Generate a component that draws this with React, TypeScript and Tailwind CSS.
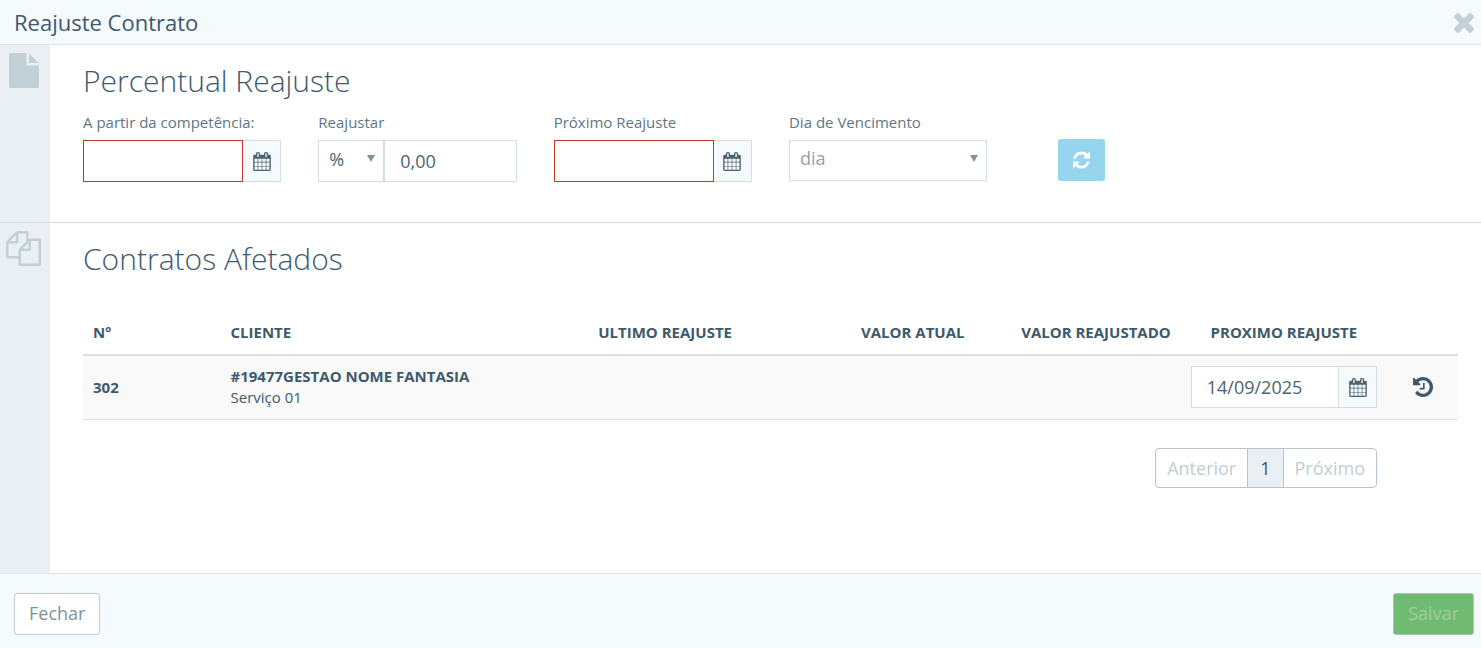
import { useState, type ReactNode } from "react";
import clsx from "clsx";

type IconProps = {
    viewBox: string;
    d: string;
    className?: string;
};

const Icon = ({ viewBox, d, className }: IconProps) => (
    <svg viewBox={viewBox} fill="currentColor" aria-hidden="true" className={className}>
        <path d={d} />
    </svg>
);

const CalendarIcon = () => (
    <Icon
        viewBox="0 0 1664 1792"
        className="h-[19px] w-[18px]"
        d="M128 1664h288v-288h-288v288zm352 0h320v-288h-320v288zm-352-352h288v-320h-288v320zm352 0h320v-320h-320v320zm-352-384h288v-288h-288v288zm736 736h320v-288h-320v288zm-384-736h320v-288h-320v288zm768 736h288v-288h-288v288zm-384-352h320v-320h-320v320zm-352-864v-288q0-13-9.5-22.5t-22.5-9.5h-64q-13 0-22.5 9.5t-9.5 22.5v288q0 13 9.5 22.5t22.5 9.5h64q13 0 22.5-9.5t9.5-22.5zm736 864h288v-320h-288v320zm-384-384h320v-288h-320v288zm384 0h288v-288h-288v288zm32-480v-288q0-13-9.5-22.5t-22.5-9.5h-64q-13 0-22.5 9.5t-9.5 22.5v288q0 13 9.5 22.5t22.5 9.5h64q13 0 22.5-9.5t9.5-22.5zm384-64v1280q0 52-38 90t-90 38h-1408q-52 0-90-38t-38-90v-1280q0-52 38-90t90-38h128v-96q0-66 47-113t113-47h64q66 0 113 47t47 113v96h384v-96q0-66 47-113t113-47h64q66 0 113 47t47 113v96h128q52 0 90 38t38 90z"
    />
);

const RefreshIcon = () => (
    <Icon
        viewBox="0 0 1536 1792"
        className="h-5 w-[17px]"
        d="M1511 1056q0 5-1 7-64 268-268 434.5t-478 166.5q-146 0-282.5-55t-243.5-157l-129 129q-19 19-45 19t-45-19-19-45v-448q0-26 19-45t45-19h448q26 0 45 19t19 45-19 45l-137 137q71 66 161 102t187 36q134 0 250-65t186-179q11-17 53-117 8-23 30-23h192q13 0 22.5 9.5t9.5 22.5zm25-800v448q0 26-19 45t-45 19h-448q-26 0-45-19t-19-45 19-45l138-138q-148-137-349-137-134 0-250 65t-186 179q-11 17-53 117-8 23-30 23h-199q-13 0-22.5-9.5t-9.5-22.5v-7q65-268 270-434.5t480-166.5q146 0 284 55.5t245 156.5l130-129q19-19 45-19t45 19 19 45z"
    />
);

const HistoryIcon = () => (
    <Icon
        viewBox="0 0 1536 1792"
        className="h-6 w-5"
        d="M1536 896q0 156-61 298t-164 245-245 164-298 61q-172 0-327-72.5t-264-204.5q-7-10-6.5-22.5t8.5-20.5l137-138q10-9 25-9 16 2 23 12 73 95 179 147t225 52q104 0 198.5-40.5t163.5-109.5 109.5-163.5 40.5-198.5-40.5-198.5-109.5-163.5-163.5-109.5-198.5-40.5q-98 0-188 35.5t-160 101.5l137 138q31 30 14 69-17 40-59 40h-448q-26 0-45-19t-19-45v-448q0-42 40-59 39-17 69 14l130 129q107-101 244.5-156.5t284.5-55.5q156 0 298 61t245 164 164 245 61 298zm-640-288v448q0 14-9 23t-23 9h-320q-14 0-23-9t-9-23v-64q0-14 9-23t23-9h224v-352q0-14 9-23t23-9h64q14 0 23 9t9 23z"
    />
);

const FileIcon = () => (
    <Icon
        viewBox="128 0 1536 1792"
        className="h-[35px] w-[30px]"
        d="M1152 512v-472q22 14 36 28l408 408q14 14 28 36h-472zm-128 32q0 40 28 68t68 28h544v1056q0 40-28 68t-68 28h-1344q-40 0-68-28t-28-68v-1600q0-40 28-68t68-28h800v544z"
    />
);

const FilesIcon = () => (
    <Icon
        viewBox="0 0 1792 1792"
        className="h-[35px] w-[35px]"
        d="M1696 384q40 0 68 28t28 68v1216q0 40-28 68t-68 28h-960q-40 0-68-28t-28-68v-288h-544q-40 0-68-28t-28-68v-672q0-40 20-88t48-76l408-408q28-28 76-48t88-20h416q40 0 68 28t28 68v328q68-40 128-40h416zm-544 213l-299 299h299v-299zm-640-384l-299 299h299v-299zm196 647l316-316v-416h-384v416q0 40-28 68t-68 28h-416v640h512v-256q0-40 20-88t48-76zm956 804v-1152h-384v416q0 40-28 68t-68 28h-416v640h896z"
    />
);

const CloseIcon = () => (
    <Icon
        viewBox="302 366 1188 1188"
        className="h-5 w-5"
        d="M1490 1322q0 40-28 68l-136 136q-28 28-68 28t-68-28l-294-294-294 294q-28 28-68 28t-68-28l-136-136q-28-28-28-68t28-68l294-294-294-294q-28-28-28-68t28-68l136-136q28-28 68-28t68 28l294 294 294-294q28-28 68-28t68 28l136 136q28 28 28 68t-28 68l-294 294 294 294q28 28 28 68z"
    />
);

const Section = ({ icon, title, children }: { icon: ReactNode; title: string; children: ReactNode }) => (
    <>
        <div className="flex w-[50px] shrink-0 justify-center bg-[#e9eff3] pt-2 pr-[3px] text-[#c4d0d7]">{icon}</div>
        <div className="min-w-0 flex-1 pt-4 pr-[23px] pl-[33px]">
            <h2 className="text-[30px] leading-10 font-light text-[#3d596b]">{title}</h2>
            {children}
        </div>
    </>
);

const Field = ({ id, label, children }: { id: string; label: string; children: ReactNode }) => (
    <div>
        <label htmlFor={id} className="block pb-2 text-[15px] leading-5 text-[#5f7684]">
            {label}
        </label>
        {children}
    </div>
);

type DateInputProps = {
    id: string;
    invalid?: boolean;
    initial?: string;
    label?: string;
};

const DateInput = ({ id, invalid, initial = "", label }: DateInputProps) => {
    const [value, setValue] = useState(initial);

    return (
        <div className="flex h-[42px]">
            <input
                id={id}
                type="text"
                aria-label={label}
                aria-invalid={invalid}
                value={value}
                onChange={(e) => setValue(e.target.value)}
                className={clsx(
                    "w-full min-w-0 flex-1 border bg-white px-[15px] text-[18px] text-[#4d6370] outline-none",
                    invalid ? "border-[#c0392b]" : "border-[#d3dfe3]"
                )}
            />
            <button
                type="button"
                aria-label="Abrir calendário"
                className="flex w-[38px] shrink-0 items-center justify-center border border-l-0 border-[#d3dfe3] bg-[#f5fafd] text-[#4d6370]"
            >
                <CalendarIcon />
            </button>
        </div>
    );
};

const Arrow = () => (
    <svg viewBox="0 0 8 7" aria-hidden="true" className="pointer-events-none absolute top-[15px] right-[9px] h-[7px] w-2">
        <path d="M0 0h8L4 7z" fill="#80929d" />
    </svg>
);

// CLIENTE takes whatever the other columns leave
const headings = [
    { label: "Nº", className: "w-[10%] text-left" },
    { label: "CLIENTE", className: "text-left" },
    { label: "ULTIMO REAJUSTE", className: "w-[15%] text-center" },
    { label: "VALOR ATUAL", className: "w-[15%] text-right" },
    { label: "VALOR REAJUSTADO", className: "w-[15%] text-right" },
    { label: "PROXIMO REAJUSTE", className: "w-[15%] text-center" },
    { label: "", className: "w-[71px]" },
];

const App = () => {
    const [amount, setAmount] = useState("0,00");

    return (
        <div className="flex min-h-screen flex-col bg-white font-['Open_Sans',sans-serif] text-[#3d596b]">
            <header className="flex h-[45px] items-center justify-between border-b border-[#dde6ea] bg-[#f5fafd] pr-[7px] pl-[14px]">
                <h1 className="text-[22px] leading-8">Reajuste Contrato</h1>
                <button type="button" aria-label="Fechar janela" className="pt-px text-[#c4d0d7]">
                    <CloseIcon />
                </button>
            </header>

            <section className="flex border-b border-[#d3dfe3]">
                <Section icon={<FileIcon />} title="Percentual Reajuste">
                    <div className="grid grid-cols-6 gap-x-[37px] pt-[11px] pb-10">
                        <Field id="competencia" label="A partir da competência:">
                            <DateInput id="competencia" invalid />
                        </Field>
                        <Field id="valor" label="Reajustar">
                            <div className="flex h-[42px]">
                                <div className="relative w-[66px] shrink-0">
                                    <select
                                        aria-label="Tipo de reajuste"
                                        className="h-full w-full appearance-none border border-[#d3dfe3] bg-white pr-5 pb-1 pl-[10px] text-[18px] text-[#4d6370] outline-none"
                                    >
                                        <option>%</option>
                                        <option>R$</option>
                                    </select>
                                    <Arrow />
                                </div>
                                <input
                                    id="valor"
                                    type="text"
                                    value={amount}
                                    onChange={(e) => setAmount(e.target.value)}
                                    className="w-full min-w-0 flex-1 border border-[#d3dfe3] px-[15px] text-[18px] text-[#4d6370] outline-none"
                                />
                            </div>
                        </Field>
                        <Field id="proximo" label="Próximo Reajuste">
                            <DateInput id="proximo" invalid />
                        </Field>
                        <Field id="vencimento" label="Dia de Vencimento">
                            <div className="relative h-[41px]">
                                <select
                                    id="vencimento"
                                    className="h-full w-full appearance-none border border-[#d3dfe3] bg-white pr-5 pb-1 pl-[10px] text-[18px] text-[#93a2ab] outline-none"
                                >
                                    <option>dia</option>
                                </select>
                                <Arrow />
                            </div>
                        </Field>
                        <div className="flex items-end pb-px pl-[34px]">
                            <button
                                type="button"
                                aria-label="Atualizar"
                                className="flex h-[42px] w-[47px] items-center justify-center rounded-[3px] bg-[#95d6ee] text-white"
                            >
                                <RefreshIcon />
                            </button>
                        </div>
                    </div>
                </Section>
            </section>

            <section className="flex flex-1">
                <Section icon={<FilesIcon />} title="Contratos Afetados">
                    <table className="mt-[31px] w-full table-fixed border-collapse text-[15px] leading-[21px]">
                        <thead>
                            <tr className="h-[45px] border-b-2 border-[#dddddd]">
                                {headings.map(({ label, className }) => (
                                    <th key={label} className={clsx("px-[10px] font-bold whitespace-nowrap", className)}>
                                        {label}
                                    </th>
                                ))}
                            </tr>
                        </thead>
                        <tbody>
                            <tr className="h-16 border-b border-[#d9e0e2] bg-[#f9f9f9]">
                                <td className="px-[10px] font-bold">302</td>
                                <td className="px-[10px]">
                                    <div className="font-bold">#19477GESTAO NOME FANTASIA</div>
                                    <div>Serviço 01</div>
                                </td>
                                <td></td>
                                <td></td>
                                <td></td>
                                <td className="px-[10px]">
                                    <DateInput id="proximo-302" initial="14/09/2025" label="Próximo reajuste do contrato 302" />
                                </td>
                                <td className="text-center">
                                    <button type="button" aria-label="Histórico" className="align-middle">
                                        <HistoryIcon />
                                    </button>
                                </td>
                            </tr>
                        </tbody>
                    </table>

                    <nav aria-label="Paginação" className="flex justify-end pt-7 pr-[81px] pb-10">
                        <div className="flex h-10 overflow-hidden rounded-[4px] border border-[#b5c4cd] text-[18px]">
                            <button type="button" disabled className="px-[11px] pt-px text-[#c0ced4]">
                                Anterior
                            </button>
                            <button type="button" aria-current="page" className="border-x border-[#b5c4cd] bg-[#e9eff3] px-3 pt-px">
                                1
                            </button>
                            <button type="button" disabled className="px-[11px] pt-px text-[#c0ced4]">
                                Próximo
                            </button>
                        </div>
                    </nav>
                </Section>
            </section>

            <footer className="flex justify-between border-t border-[#dde6ea] bg-[#f5fafd] pt-[19px] pr-[7px] pb-[13px] pl-[14px] text-[18px]">
                <button type="button" className="h-[42px] rounded-[3px] border border-[#bccbd5] bg-white px-[14px] pb-px text-[#7d929e]">
                    Fechar
                </button>
                <button type="button" disabled className="h-[42px] rounded-[3px] border border-[#a9c6bd] bg-[#71ba72] px-[14px] pb-px text-[#9bd09c]">
                    Salvar
                </button>
            </footer>
        </div>
    );
};

export default App;
